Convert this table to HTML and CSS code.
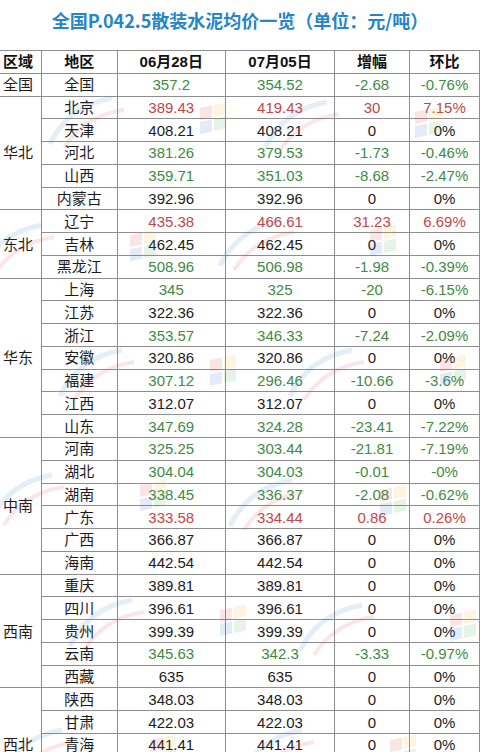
FILE: index.html
```html
<!DOCTYPE html>
<html lang="zh-CN">
<head>
<meta charset="utf-8">
<title>全国P.042.5散装水泥均价一览</title>
<link rel="stylesheet" href="styles.css">
</head>
<body>
<div class="page">
  <h1 class="title">全国P.042.5散装水泥均价一览（单位：元/吨）</h1>
  <div class="sheet">
    <div class="grid">
      <div class="c hd region">区域</div><div class="c hd">地区</div><div class="c hd">06月28日</div><div class="c hd">07月05日</div><div class="c hd">增幅</div><div class="c hd">环比</div>

      <div class="c region">全国</div><div class="c">全国</div><div class="c g">357.2</div><div class="c g">354.52</div><div class="c g">-2.68</div><div class="c g">-0.76%</div>

      <div class="c region s5">华北</div>
      <div class="c">北京</div><div class="c r">389.43</div><div class="c r">419.43</div><div class="c r">30</div><div class="c r">7.15%</div>
      <div class="c">天津</div><div class="c">408.21</div><div class="c">408.21</div><div class="c">0</div><div class="c">0%</div>
      <div class="c">河北</div><div class="c g">381.26</div><div class="c g">379.53</div><div class="c g">-1.73</div><div class="c g">-0.46%</div>
      <div class="c">山西</div><div class="c g">359.71</div><div class="c g">351.03</div><div class="c g">-8.68</div><div class="c g">-2.47%</div>
      <div class="c">内蒙古</div><div class="c">392.96</div><div class="c">392.96</div><div class="c">0</div><div class="c">0%</div>

      <div class="c region s3">东北</div>
      <div class="c">辽宁</div><div class="c r">435.38</div><div class="c r">466.61</div><div class="c r">31.23</div><div class="c r">6.69%</div>
      <div class="c">吉林</div><div class="c">462.45</div><div class="c">462.45</div><div class="c">0</div><div class="c">0%</div>
      <div class="c">黑龙江</div><div class="c g">508.96</div><div class="c g">506.98</div><div class="c g">-1.98</div><div class="c g">-0.39%</div>

      <div class="c region s7">华东</div>
      <div class="c">上海</div><div class="c g">345</div><div class="c g">325</div><div class="c g">-20</div><div class="c g">-6.15%</div>
      <div class="c">江苏</div><div class="c">322.36</div><div class="c">322.36</div><div class="c">0</div><div class="c">0%</div>
      <div class="c">浙江</div><div class="c g">353.57</div><div class="c g">346.33</div><div class="c g">-7.24</div><div class="c g">-2.09%</div>
      <div class="c">安徽</div><div class="c">320.86</div><div class="c">320.86</div><div class="c">0</div><div class="c">0%</div>
      <div class="c">福建</div><div class="c g">307.12</div><div class="c g">296.46</div><div class="c g">-10.66</div><div class="c g">-3.6%</div>
      <div class="c">江西</div><div class="c">312.07</div><div class="c">312.07</div><div class="c">0</div><div class="c">0%</div>
      <div class="c">山东</div><div class="c g">347.69</div><div class="c g">324.28</div><div class="c g">-23.41</div><div class="c g">-7.22%</div>

      <div class="c region s6">中南</div>
      <div class="c">河南</div><div class="c g">325.25</div><div class="c g">303.44</div><div class="c g">-21.81</div><div class="c g">-7.19%</div>
      <div class="c">湖北</div><div class="c g">304.04</div><div class="c g">304.03</div><div class="c g">-0.01</div><div class="c g">-0%</div>
      <div class="c">湖南</div><div class="c g">338.45</div><div class="c g">336.37</div><div class="c g">-2.08</div><div class="c g">-0.62%</div>
      <div class="c">广东</div><div class="c r">333.58</div><div class="c r">334.44</div><div class="c r">0.86</div><div class="c r">0.26%</div>
      <div class="c">广西</div><div class="c">366.87</div><div class="c">366.87</div><div class="c">0</div><div class="c">0%</div>
      <div class="c">海南</div><div class="c">442.54</div><div class="c">442.54</div><div class="c">0</div><div class="c">0%</div>

      <div class="c region s5">西南</div>
      <div class="c">重庆</div><div class="c">389.81</div><div class="c">389.81</div><div class="c">0</div><div class="c">0%</div>
      <div class="c">四川</div><div class="c">396.61</div><div class="c">396.61</div><div class="c">0</div><div class="c">0%</div>
      <div class="c">贵州</div><div class="c">399.39</div><div class="c">399.39</div><div class="c">0</div><div class="c">0%</div>
      <div class="c">云南</div><div class="c g">345.63</div><div class="c g">342.3</div><div class="c g">-3.33</div><div class="c g">-0.97%</div>
      <div class="c">西藏</div><div class="c">635</div><div class="c">635</div><div class="c">0</div><div class="c">0%</div>

      <div class="c region s5">西北</div>
      <div class="c">陕西</div><div class="c">348.03</div><div class="c">348.03</div><div class="c">0</div><div class="c">0%</div>
      <div class="c">甘肃</div><div class="c">422.03</div><div class="c">422.03</div><div class="c">0</div><div class="c">0%</div>
      <div class="c">青海</div><div class="c">441.41</div><div class="c">441.41</div><div class="c">0</div><div class="c">0%</div>
      <div class="c">宁夏</div><div class="c"></div><div class="c"></div><div class="c"></div><div class="c"></div>
      <div class="c">新疆</div><div class="c"></div><div class="c"></div><div class="c"></div><div class="c"></div>
    </div>

    <svg class="wm" width="480" height="760" viewBox="0 0 480 760" aria-hidden="true">
      <defs>
        <g id="logo">
          <path d="M0 46 Q18 8 62 0" fill="none" stroke="#3a7fd0" stroke-width="5"/>
          <path d="M14 50 Q34 18 74 12" fill="none" stroke="#e04a4a" stroke-width="4"/>
          <g transform="translate(150 10) skewY(-12)">
            <rect x="0" y="0" width="12" height="12" fill="#e04040"/>
            <rect x="14" y="0" width="12" height="12" fill="#f0b020"/>
            <rect x="0" y="14" width="12" height="12" fill="#2f6fd0"/>
            <rect x="14" y="14" width="12" height="12" fill="#4aa84a"/>
          </g>
        </g>
      </defs>
      <use href="#logo" x="50" y="48"/>
      <use href="#logo" x="265" y="52"/>
      <use href="#logo" x="-20" y="175"/>
      <use href="#logo" x="220" y="170"/>
      <use href="#logo" x="60" y="300"/>
      <use href="#logo" x="290" y="300"/>
      <use href="#logo" x="-10" y="425"/>
      <use href="#logo" x="230" y="430"/>
      <use href="#logo" x="70" y="550"/>
      <use href="#logo" x="300" y="555"/>
      <use href="#logo" x="0" y="680"/>
      <use href="#logo" x="240" y="680"/>
    </svg>
  </div>
</div>
</body>
</html>
```

FILE: styles.css
```css
html, body {
  margin: 0;
  padding: 0;
  background: #ffffff;
}

.page {
  width: 480px;
  overflow: hidden;
}

.title {
  margin: 0;
  height: 50px;
  box-sizing: border-box;
  padding-top: 10px;
  font-family: "Noto Sans CJK SC", sans-serif;
  font-size: 18px;
  line-height: 20px;
  font-weight: 700;
  color: #2585c5;
  text-align: center;
  letter-spacing: 0;
}

.sheet {
  position: relative;
}

.grid {
  display: grid;
  grid-template-columns: 42px 75.5px 108.5px 109px 75px 70px;
  grid-auto-rows: 22.77px;
  border-top: 1px solid #8e8e8e;
  font-family: "Liberation Sans", "Noto Sans CJK SC", sans-serif;
  font-size: 15px;
  color: #1c1c1c;
}

.c {
  box-sizing: border-box;
  border-right: 1px solid #8e8e8e;
  border-bottom: 1px solid #8e8e8e;
  display: flex;
  align-items: center;
  justify-content: center;
  line-height: 1;
  white-space: nowrap;
}

.hd {
  font-weight: 700;
  color: #111111;
}

.region {
  justify-content: flex-start;
  padding-left: 3px;
}

.s3 { grid-row: span 3; }
.s5 { grid-row: span 5; }
.s6 { grid-row: span 6; }
.s7 { grid-row: span 7; }

.g { color: #3f8a45; }
.r { color: #c0484b; }

.wm {
  position: absolute;
  left: 0;
  top: 0;
  opacity: 0.13;
  pointer-events: none;
}
```
